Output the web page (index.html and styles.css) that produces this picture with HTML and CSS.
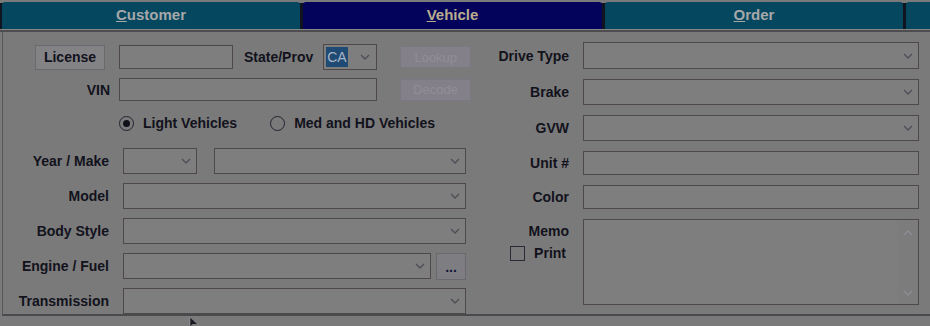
FILE: index.html
```html
<!DOCTYPE html>
<html lang="en">
<head>
  <meta charset="UTF-8">
  <title>Vehicle</title>
  <link rel="stylesheet" href="styles.css">
</head>
<body>
  <div class="tabs">
    <div class="tab"><u>C</u>ustomer</div>
    <div class="tab active"><u>V</u>ehicle</div>
    <div class="tab"><u>O</u>rder</div>
    <div class="tab stub"></div>
  </div>
  <div class="rule"></div>

  <div class="panel">
    <div class="left">
      <div class="row row-license">
        <button class="btn">License</button>
        <div class="field w-license"></div>
        <span class="label state-label">State/Prov</span>
        <div class="select w-state">
          <span class="picked">CA</span>
          <svg class="chev" width="10" height="6" viewBox="0 0 10 6"><polyline points="1,1 5,5 9,1"/></svg>
        </div>
        <button class="btn off">Lookup</button>
      </div>

      <div class="row row-vin">
        <span class="label vin-label">VIN</span>
        <div class="field w-vin"></div>
        <button class="btn off">Decode</button>
      </div>

      <div class="row row-radios">
        <span class="radio on"></span>
        <span class="label">Light Vehicles</span>
        <span class="radio second"></span>
        <span class="label">Med and HD Vehicles</span>
      </div>

      <div class="grid-left">
        <span class="label">Year / Make</span>
        <div class="pair">
          <div class="select w-year"><svg class="chev" width="10" height="6" viewBox="0 0 10 6"><polyline points="1,1 5,5 9,1"/></svg></div>
          <div class="select w-make"><svg class="chev" width="10" height="6" viewBox="0 0 10 6"><polyline points="1,1 5,5 9,1"/></svg></div>
        </div>

        <span class="label">Model</span>
        <div class="select w-full"><svg class="chev" width="10" height="6" viewBox="0 0 10 6"><polyline points="1,1 5,5 9,1"/></svg></div>

        <span class="label">Body Style</span>
        <div class="select w-full"><svg class="chev" width="10" height="6" viewBox="0 0 10 6"><polyline points="1,1 5,5 9,1"/></svg></div>

        <span class="label">Engine / Fuel</span>
        <div class="pair">
          <div class="select w-engine"><svg class="chev" width="10" height="6" viewBox="0 0 10 6"><polyline points="1,1 5,5 9,1"/></svg></div>
          <button class="btn dots">...</button>
        </div>

        <span class="label">Transmission</span>
        <div class="select w-full"><svg class="chev" width="10" height="6" viewBox="0 0 10 6"><polyline points="1,1 5,5 9,1"/></svg></div>
      </div>
    </div>

    <div class="right">
      <span class="label">Drive Type</span>
      <div class="select h27"><svg class="chev" width="10" height="6" viewBox="0 0 10 6"><polyline points="1,1 5,5 9,1"/></svg></div>

      <span class="label">Brake</span>
      <div class="select"><svg class="chev" width="10" height="6" viewBox="0 0 10 6"><polyline points="1,1 5,5 9,1"/></svg></div>

      <span class="label">GVW</span>
      <div class="select"><svg class="chev" width="10" height="6" viewBox="0 0 10 6"><polyline points="1,1 5,5 9,1"/></svg></div>

      <span class="label">Unit #</span>
      <div class="field h24"></div>

      <span class="label">Color</span>
      <div class="field h24"></div>

      <div class="memo-side">
        <span class="label">Memo</span>
        <span class="check-line"><span class="check"></span><span class="label">Print</span></span>
      </div>
      <div class="memo">
        <div class="scroll">
          <svg width="10" height="6" viewBox="0 0 10 6"><polyline points="1,5 5,1 9,5"/></svg>
          <svg width="10" height="6" viewBox="0 0 10 6"><polyline points="1,1 5,5 9,1"/></svg>
        </div>
      </div>
    </div>
  </div>

  <!-- mouse pointer -->
  <svg class="cursor" width="12" height="10" viewBox="0 0 12 10"><path d="M1 0 L1 10 L3.5 7.5 L9 7.5 Z"/></svg>
</body>
</html>
```

FILE: styles.css
```css
body {
  margin: 0;
  background: #7a7a7a;
  font-family: "Liberation Sans", Arial, sans-serif;
  font-size: 14px;
  font-weight: bold;
  color: #12121c;
  width: 930px;
  height: 326px;
  overflow: hidden;
  position: relative;
}
.tabs {
  display: flex;
  gap: 3px;
  height: 29px;
  padding: 2px 0 0 2px;
  box-sizing: border-box;
  background: linear-gradient(#7a7a7a 0 3px, #10141e 3px);
}
.tab {
  width: 298px;
  flex: none;
  background: #05475f;
  color: #a6a8aa;
  font-size: 15px;
  text-align: center;
  line-height: 26px;
  border-radius: 3px 3px 0 0;
}
.tab.active {
  background: #03035c;
  color: #b9ad8e;
  width: 299px;
}
.tab.stub {
  width: 40px;
}
.rule {
  height: 1px;
  background: #878787;
  border-bottom: 2px solid #4d4d50;
}
.panel {
  display: flex;
  margin-left: 2px;
  height: 282px;
  border-left: 1px solid #58585c;
  border-bottom: 2px solid #4a4a4e;
}
.left {
  width: 477px;
  flex: none;
  padding-top: 12px;
}
.row {
  display: flex;
  align-items: center;
}
.label {
  white-space: nowrap;
}
.btn {
  font: inherit;
  color: inherit;
  background: #838385;
  border: 1px solid #6a6a6e;
  padding: 0;
  height: 25px;
}
.btn.off {
  width: 71px;
  height: 22px;
  margin-left: 23px;
  background: #848089;
  border-color: #7a7880;
  color: #918e98;
  font-weight: normal;
  font-size: 13px;
}
.field, .select {
  background: #7e7e7e;
  border: 1px solid #4f4848;
  box-sizing: border-box;
  height: 26px;
}
.select {
  position: relative;
  display: flex;
  align-items: center;
  justify-content: flex-end;
  padding-right: 5px;
}
.chev polyline, .scroll polyline {
  fill: none;
  stroke: #4e4e58;
  stroke-width: 1.3;
}

/* first row */
.row-license {
  height: 26px;
  padding-left: 32px;
}
.row-license .btn:first-child {
  width: 70px;
}
.w-license {
  width: 114px;
  height: 24px;
  margin-left: 14px;
}
.state-label {
  margin-left: 11px;
}
.w-state {
  width: 54px;
  margin-left: 10px;
  justify-content: space-between;
  padding: 0 6px 0 2px;
}
.picked {
  background: #1f4a74;
  color: #a9b4c4;
  font-weight: normal;
  padding: 1px 1px;
  line-height: 18px;
}

.row-vin {
  margin-top: 8px;
  height: 23px;
}
.vin-label {
  width: 107px;
  text-align: right;
}
.w-vin {
  width: 258px;
  height: 23px;
  margin-left: 9px;
}

.row-radios {
  margin-top: 14px;
  height: 16px;
  padding-left: 116px;
}
.radio {
  width: 13px;
  height: 13px;
  border: 1px solid #222230;
  border-radius: 50%;
  margin-right: 9px;
  display: flex;
  align-items: center;
  justify-content: center;
}
.radio.on::after {
  content: "";
  width: 7px;
  height: 7px;
  border-radius: 50%;
  background: #10101a;
}
.radio.second {
  margin-left: 33px;
}

.grid-left {
  display: grid;
  grid-template-columns: 106px 343px;
  column-gap: 14px;
  row-gap: 9px;
  margin-top: 17px;
  grid-auto-rows: 26px;
  align-items: center;
}
.grid-left > .label {
  text-align: right;
}
.pair {
  display: flex;
  justify-content: space-between;
  height: 26px;
}
.w-year { width: 74px; }
.w-make { width: 252px; }
.w-engine { width: 308px; }
.btn.dots {
  width: 30px;
  height: 27px;
  background: #7e7e82;
  color: #14143a;
  line-height: 14px;
}

.right {
  display: grid;
  grid-template-columns: 89px 336px;
  column-gap: 14px;
  row-gap: 10px;
  grid-template-rows: 27px 26px 26px 24px 24px 86px;
  padding-top: 10px;
  align-items: center;
}
.right > .label {
  text-align: right;
}
.h27 { height: 27px; }
.h24 { height: 24px; }
.memo-side {
  align-self: start;
  display: flex;
  flex-direction: column;
  align-items: flex-end;
  padding-top: 4px;
}
.check-line {
  display: flex;
  align-items: center;
  margin-top: 6px;
  margin-right: 3px;
}
.check {
  width: 13px;
  height: 13px;
  border: 1px solid #2a2a34;
  margin-right: 9px;
}
.memo {
  height: 86px;
  background: #7e7e7e;
  border: 1px solid #4f4848;
  box-sizing: border-box;
  display: flex;
  justify-content: flex-end;
}
.scroll {
  width: 21px;
  background: #7c7c7c;
  display: flex;
  flex-direction: column;
  justify-content: space-between;
  align-items: center;
  padding: 10px 0 8px;
  box-sizing: border-box;
}
.scroll polyline {
  stroke: #8e8e94;
}
.cursor {
  position: absolute;
  left: 189px;
  top: 317px;
}
.cursor path {
  fill: #1a1a22;
  stroke: #9a9a9a;
  stroke-width: 0.6;
}
```
